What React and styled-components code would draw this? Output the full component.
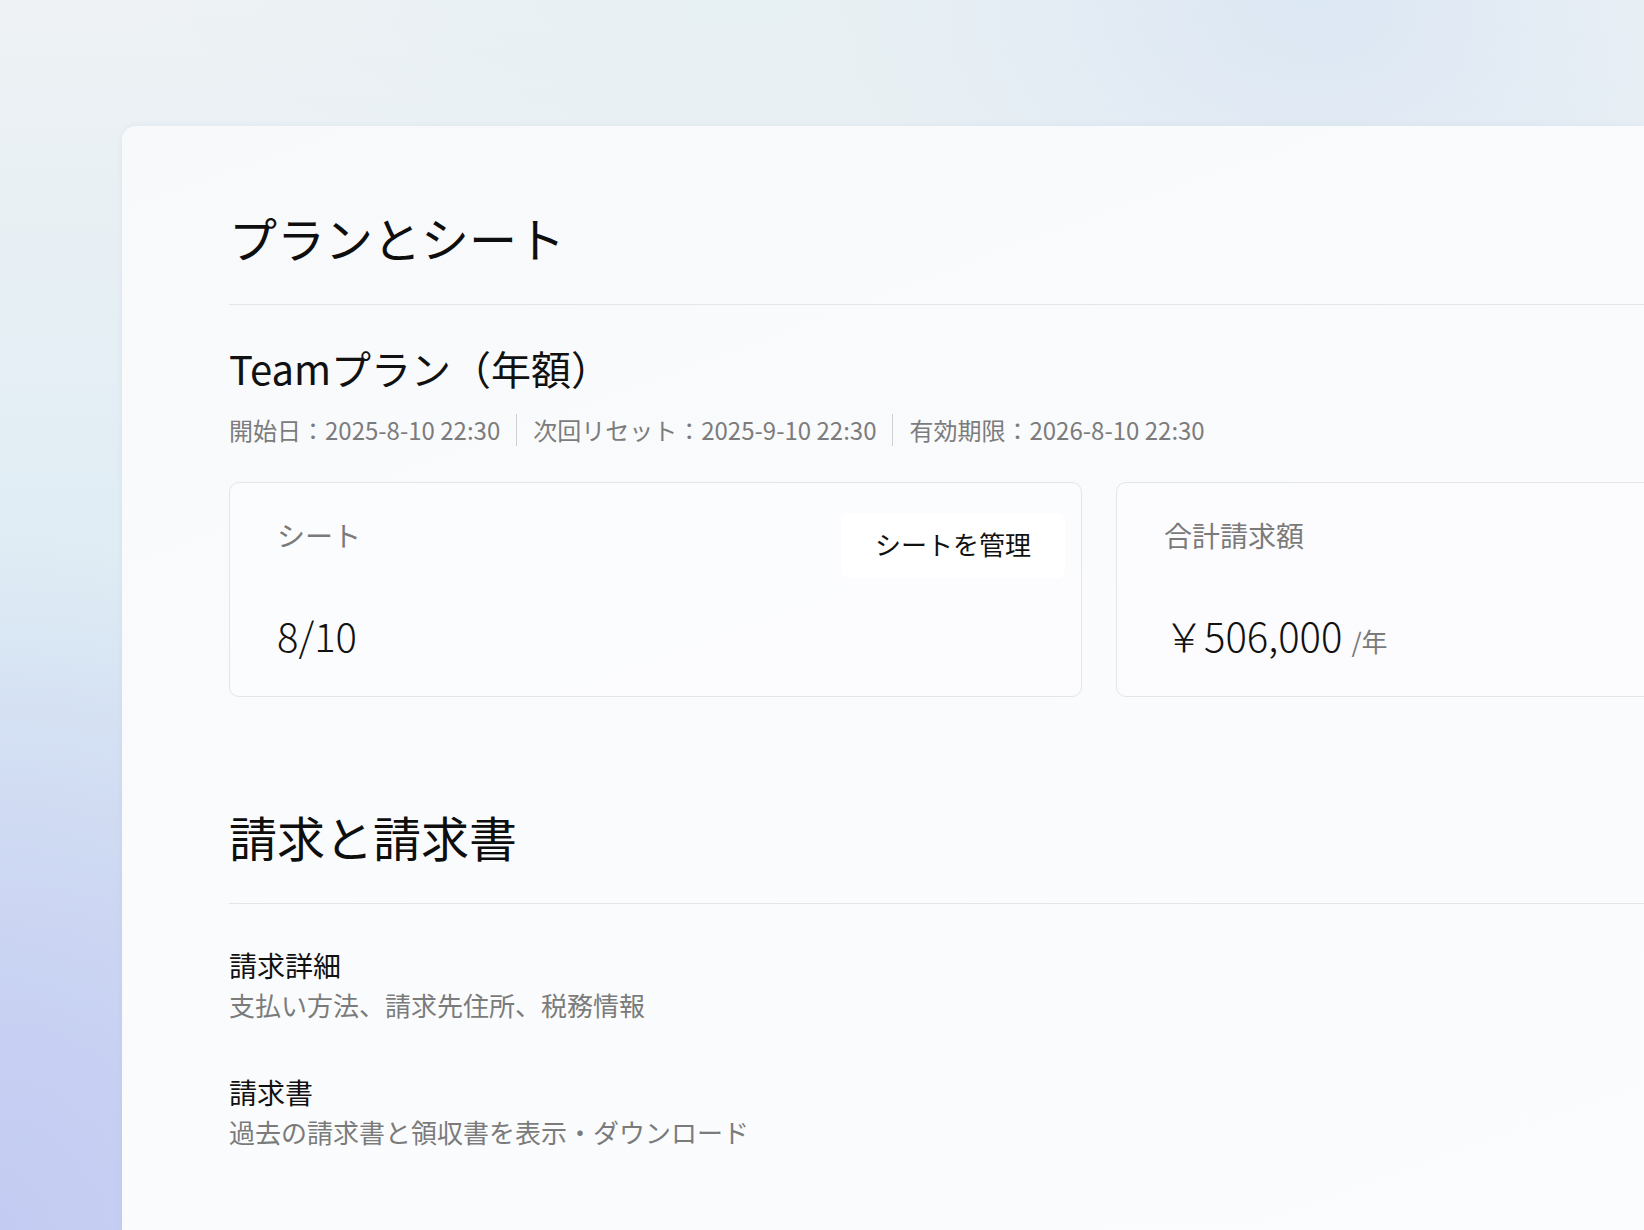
import React from 'react'
import styled, { createGlobalStyle } from 'styled-components'

const GlobalStyle = createGlobalStyle`
  html, body {
    margin: 0;
    padding: 0;
    width: 1644px;
    height: 1230px;
    overflow: hidden;
  }
  body {
    font-family: "Noto Sans CJK JP", "Noto Sans", sans-serif;
    color: #111;
    background:
      radial-gradient(ellipse 520px 700px at 0% 100%, #c3cbf2 0%, rgba(195, 203, 242, 0) 100%),
      radial-gradient(ellipse 500px 360px at 80% 0%, #dce7f4 0%, rgba(220, 231, 244, 0) 100%),
      radial-gradient(ellipse 600px 200px at 45% 0%, #e7f0f3 0%, rgba(231, 240, 243, 0) 100%),
      linear-gradient(180deg, #eef2f4 0%, #deecf4 50%, #cdd8f2 100%);
  }
`

const Panel = styled.main`
  box-sizing: border-box;
  margin: 126px 0 0 122px;
  width: 1522px;
  height: 1104px;
  overflow: hidden;
  padding: 82px 0 0 107px;
  border-radius: 14px 0 0 0;
  background: linear-gradient(160deg, #f8f9fb 0%, #fafbfd 50%, #fbfcfe 100%);
  box-shadow: 0 0 6px rgba(140, 160, 190, 0.12);
`

const SectionTitle = styled.h1`
  margin: 0;
  font-size: 48px;
  line-height: 58px;
  font-weight: 400;
  color: #0e0e0e;
  margin-top: ${(p) => p.$top || 0}px;
`

const Divider = styled.hr`
  margin: 38px 0 0;
  border: none;
  height: 1px;
  background: #e4e6e9;
`

const PlanName = styled.h2`
  margin: 39px 0 0;
  font-size: 40px;
  line-height: 48px;
  font-weight: 400;
  color: #111;
`

const Meta = styled.div`
  display: flex;
  align-items: center;
  margin-top: 22px;
  font-size: 24px;
  line-height: 32px;
  color: #7c7c7c;
`

const MetaItem = styled.span`
  padding: 0 16px;
  border-left: 1px solid #cfd1d4;
  &:first-child {
    padding-left: 0;
    border-left: none;
  }
`

const CardRow = styled.div`
  display: grid;
  grid-template-columns: 853px 853px;
  gap: 34px;
  margin-top: 36px;
`

const Card = styled.section`
  box-sizing: border-box;
  height: 215px;
  padding: 30px 16px 0 47px;
  border: 1px solid #e4e5e8;
  border-radius: 10px;
  background: rgba(252, 252, 254, 0.7);
`

const CardHead = styled.div`
  display: flex;
  justify-content: space-between;
  align-items: flex-start;
  min-height: 65px;
`

const CardLabel = styled.div`
  margin-top: 4px;
  font-size: 28px;
  line-height: 36px;
  color: #7a7a7a;
`

const Button = styled.button`
  height: 65px;
  padding: 0 34px 4px;
  border: none;
  border-radius: 8px;
  background: #ffffff;
  font-family: inherit;
  font-size: 26px;
  line-height: 30px;
  color: #111;
  cursor: pointer;
`

const Value = styled.div`
  margin-top: 33px;
  font-size: 40px;
  line-height: 48px;
  font-weight: 300;
  color: #111;
`

const Unit = styled.span`
  margin-left: 9px;
  font-size: 26px;
  font-weight: 400;
  color: #7a7a7a;
`

const Item = styled.div`
  margin-top: ${(p) => p.$top}px;
`

const ItemTitle = styled.div`
  font-size: 28px;
  line-height: 36px;
  color: #111;
`

const ItemDesc = styled.div`
  margin-top: 4px;
  font-size: 26px;
  line-height: 36px;
  color: #7b7b7b;
`

const App = () => {
  return (
    <>
      <GlobalStyle />
      <Panel>
        <SectionTitle>プランとシート</SectionTitle>
        <Divider />
        <PlanName>Teamプラン（年額）</PlanName>
        <Meta>
          <MetaItem>開始日：2025-8-10 22:30</MetaItem>
          <MetaItem>次回リセット：2025-9-10 22:30</MetaItem>
          <MetaItem>有効期限：2026-8-10 22:30</MetaItem>
        </Meta>
        <CardRow>
          <Card>
            <CardHead>
              <CardLabel>シート</CardLabel>
              <Button>シートを管理</Button>
            </CardHead>
            <Value>8/10</Value>
          </Card>
          <Card>
            <CardHead>
              <CardLabel>合計請求額</CardLabel>
            </CardHead>
            <Value>
              ￥506,000<Unit>/年</Unit>
            </Value>
          </Card>
        </CardRow>

        <SectionTitle $top={110}>請求と請求書</SectionTitle>
        <Divider />
        <Item $top={43}>
          <ItemTitle>請求詳細</ItemTitle>
          <ItemDesc>支払い方法、請求先住所、税務情報</ItemDesc>
        </Item>
        <Item $top={51}>
          <ItemTitle>請求書</ItemTitle>
          <ItemDesc>過去の請求書と領収書を表示・ダウンロード</ItemDesc>
        </Item>
      </Panel>
    </>
  )
}

export default App
